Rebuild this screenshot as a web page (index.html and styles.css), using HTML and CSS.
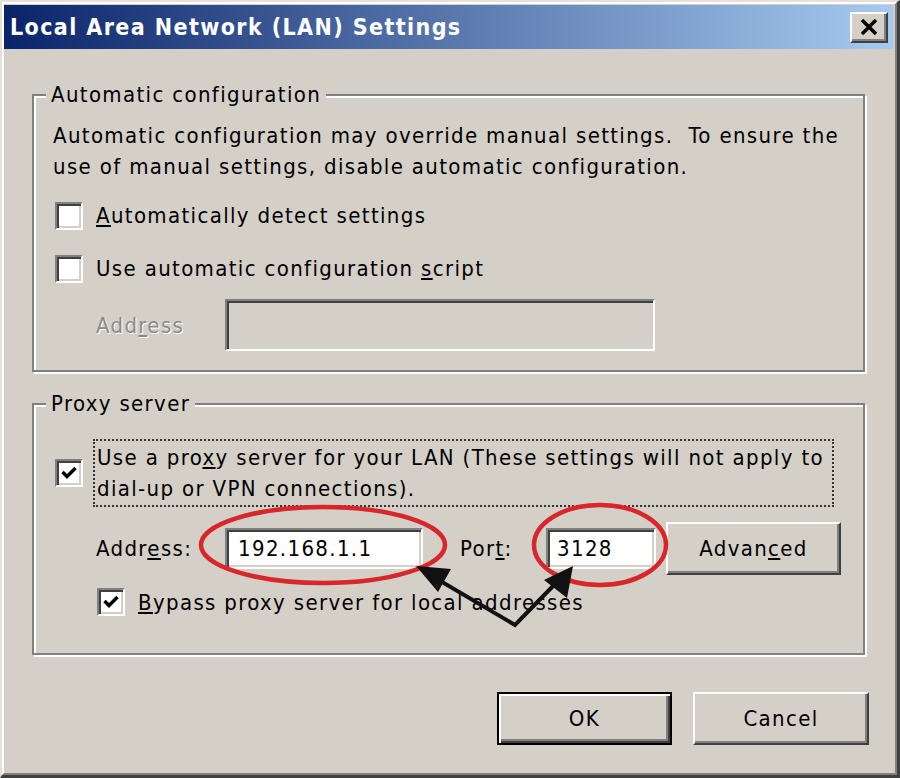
FILE: index.html
```html
<!DOCTYPE html>
<html lang="en">
<head>
    <meta charset="UTF-8">
    <meta name="viewport" content="width=device-width, initial-scale=1.0">
    <title>Local Area Network (LAN) Settings</title>
    <link rel="stylesheet" href="styles.css">
</head>
<body>
    <div class="window">
        <div class="window-inner">
            <!-- 제목 표시줄 -->
            <div class="title-bar">
                <span class="title-text">Local Area Network (LAN) Settings</span>
                <button class="close-button" aria-label="Close">
                    <svg width="18" height="16" viewBox="0 0 18 16">
                        <path d="M2 1 L16 15 M16 1 L2 15" stroke="#000" stroke-width="3.5" fill="none"/>
                    </svg>
                </button>
            </div>

            <div class="content">
                <!-- 자동 구성 -->
                <fieldset class="group group-auto">
                    <legend>Automatic configuration</legend>
                    <p class="note">Automatic configuration may override manual settings.&nbsp; To ensure the<br>use of manual settings, disable automatic configuration.</p>
                    <label class="check-row first">
                        <span class="check-box"></span>
                        <span><u>A</u>utomatically detect settings</span>
                    </label>
                    <label class="check-row">
                        <span class="check-box"></span>
                        <span>Use automatic configuration <u>s</u>cript</span>
                    </label>
                    <div class="field-row disabled">
                        <span class="field-label">Add<u>r</u>ess</span>
                        <span class="text-box script-box"></span>
                    </div>
                </fieldset>

                <!-- 프록시 서버 -->
                <fieldset class="group group-proxy">
                    <legend>Proxy server</legend>
                    <label class="proxy-row">
                        <span class="check-box checked">
                            <svg width="16" height="14" viewBox="0 0 16 14"><path d="M1.5 6 L6 10.5 L14.5 2" stroke="#000" stroke-width="3.5" fill="none"/></svg>
                        </span>
                        <span class="focus-label">Use a pro<u>x</u>y server for your LAN (These settings will not apply to<br>dial-up or VPN connections).</span>
                    </label>
                    <div class="address-row">
                        <span class="field-label">Addr<u>e</u>ss:</span>
                        <span class="text-box address-box">192.168.1.1</span>
                        <span class="port-label">Por<u>t</u>:</span>
                        <span class="text-box port-box">3128</span>
                        <button class="win-button advanced-button">Advan<u>c</u>ed</button>
                    </div>
                    <label class="check-row bypass-row">
                        <span class="check-box checked">
                            <svg width="16" height="14" viewBox="0 0 16 14"><path d="M1.5 6 L6 10.5 L14.5 2" stroke="#000" stroke-width="3.5" fill="none"/></svg>
                        </span>
                        <span><u>B</u>ypass proxy server for local addresses</span>
                    </label>
                </fieldset>

                <!-- 확인 / 취소 -->
                <div class="actions">
                    <button class="win-button default-button">OK</button>
                    <button class="win-button cancel-button">Cancel</button>
                </div>
            </div>
        </div>

        <!-- 빨간 동그라미와 화살표 표시 -->
        <svg class="annotations" width="900" height="778" viewBox="0 0 900 778">
            <ellipse cx="323" cy="545" rx="122" ry="38" fill="none" stroke="#d8262b" stroke-width="4.5"/>
            <ellipse cx="600" cy="545" rx="66" ry="40" fill="none" stroke="#d8262b" stroke-width="4.5"/>
            <path d="M437 579 L515 625 L556 583" fill="none" stroke="#111" stroke-width="4"/>
            <path d="M416 566 L451 569 L438 592 Z" fill="#111"/>
            <path d="M573 566 L567 598 L544 580 Z" fill="#111"/>
        </svg>
    </div>
</body>
</html>
```

FILE: styles.css
```css
/* 기본 설정 */
body {
    margin: 0;
    background-color: #d4d0c8;
    font-family: "DejaVu Sans Condensed", "DejaVu Sans", sans-serif;
    font-size: 22px;
    letter-spacing: 1.35px;
    color: #000;
}

/* 창 테두리 */
.window {
    position: relative;
    width: 900px;
    height: 778px;
    box-sizing: border-box;
    border-style: solid;
    border-width: 2px 3px 3px 2px;
    border-color: #e4e1da #404040 #404040 #e4e1da;
}

.window-inner {
    height: 100%;
    box-sizing: border-box;
    border-style: solid;
    border-width: 2px;
    border-color: #fff #808080 #808080 #fff;
    padding: 1px 2px 2px 0;
}

/* 제목 표시줄 */
.title-bar {
    height: 44px;
    display: flex;
    align-items: center;
    justify-content: space-between;
    padding: 0 5px 0 6px;
    background: linear-gradient(to right, #0a246a, #a6caf0);
}

.title-text {
    color: #fff;
    font-weight: bold;
    font-size: 23px;
    letter-spacing: 1.4px;
}

.close-button {
    width: 38px;
    height: 31px;
    padding: 0;
    display: flex;
    align-items: center;
    justify-content: center;
    background-color: #d4d0c8;
    border-style: solid;
    border-width: 2px;
    border-color: #fff #404040 #404040 #fff;
    box-shadow: inset -2px -2px #808080;
}

/* 본문 */
.content {
    padding: 31px 24px 0 28px;
}

/* 그룹 박스 */
.group {
    margin: 0 4px 0 0;
    border: 2px solid #808080;
    box-shadow: inset 2px 2px #fff, 2px 2px #fff;
    padding: 10px 19px 19px 19px;
}

.group legend {
    margin-left: -7px;
    padding: 0 5px;
    line-height: 30px;
    background-color: #d4d0c8;
}

.group-proxy {
    margin-top: 17px;
    padding-top: 20px;
    padding-bottom: 36px;
}

.note {
    margin: 0;
    line-height: 31px;
}

/* 체크박스 */
.check-row {
    display: flex;
    align-items: center;
    height: 31px;
    margin-top: 22px;
}

.check-row.first {
    margin-top: 18px;
}

.check-box {
    flex: none;
    width: 28px;
    height: 28px;
    box-sizing: border-box;
    margin: 0 13px 0 2px;
    display: flex;
    align-items: center;
    justify-content: center;
    background-color: #fff;
    border-style: solid;
    border-width: 2px;
    border-color: #808080 #fff #fff #808080;
    box-shadow: inset 2px 2px #404040, inset -2px -2px #d4d0c8;
}

/* 입력 칸 */
.field-row {
    display: flex;
    align-items: center;
    margin-top: 15px;
    padding-left: 43px;
}

.field-label {
    width: 129px;
}

.disabled .field-label {
    color: #8a8a8a;
    text-shadow: 1px 1px 0 #fff;
}

.text-box {
    box-sizing: border-box;
    display: flex;
    align-items: center;
    padding: 0 9px;
    background-color: #fff;
    border-style: solid;
    border-width: 2px;
    border-color: #808080 #fff #fff #808080;
    box-shadow: inset 2px 2px #404040, inset -2px -2px #d4d0c8;
}

.script-box {
    width: 430px;
    height: 52px;
    background-color: #d4d0c8;
}

/* 프록시 설정 */
.proxy-row {
    display: flex;
    align-items: center;
}

.proxy-row .check-box {
    margin-right: 10px;
}

.focus-label {
    width: 741px;
    box-sizing: border-box;
    padding: 1px 2px;
    line-height: 31px;
    border: 2px dotted #333;
}

.address-row {
    display: flex;
    align-items: center;
    height: 53px;
    margin-top: 15px;
    padding-left: 43px;
}

.address-box {
    width: 198px;
    height: 41px;
    padding-left: 11px;
}

.port-label {
    width: 86px;
    margin-left: 37px;
}

.port-box {
    width: 110px;
    height: 41px;
}

.bypass-row {
    margin-top: 12px;
    height: 30px;
    padding-left: 42px;
}

/* 버튼 */
.win-button {
    box-sizing: border-box;
    height: 53px;
    padding: 0;
    font-family: inherit;
    font-size: 22px;
    letter-spacing: 1.35px;
    color: #000;
    background-color: #d4d0c8;
    border-style: solid;
    border-width: 2px;
    border-color: #fff #404040 #404040 #fff;
    box-shadow: inset -2px -2px #808080;
}

.advanced-button {
    width: 175px;
    margin-left: 10px;
}

.actions {
    display: flex;
    justify-content: flex-end;
    gap: 21px;
    margin-top: 37px;
}

.default-button {
    width: 175px;
    border: 2px solid #000;
    box-shadow: inset 2px 2px #fff, inset -2px -2px #404040, inset -4px -4px #808080;
}

.cancel-button {
    width: 176px;
}

/* 주석 표시 레이어 */
.annotations {
    position: absolute;
    top: -2px;
    left: -2px;
    pointer-events: none;
}
```
